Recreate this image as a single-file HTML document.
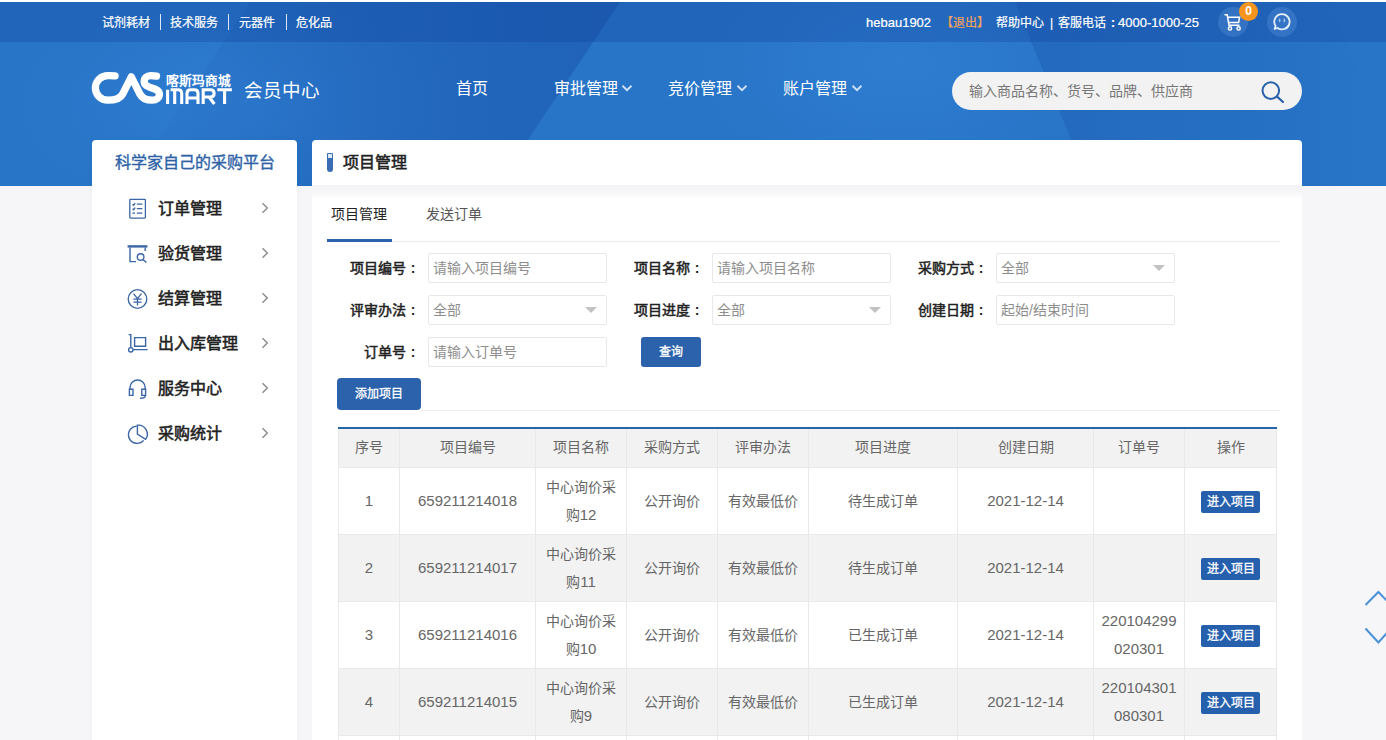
<!DOCTYPE html>
<html lang="zh-CN">
<head>
<meta charset="utf-8">
<title>项目管理 - 会员中心</title>
<style>
*{box-sizing:border-box;margin:0;padding:0}
html,body{width:1386px;height:740px;overflow:hidden}
body{position:relative;background:#f6f6f8;font-family:"Liberation Sans",sans-serif;font-size:14px;color:#666}
.abs{position:absolute;white-space:nowrap}
#hdr{position:absolute;left:0;top:2px;width:1386px;height:184px;background:#2875c8;overflow:hidden}
#hdr svg{position:absolute;left:0;top:0}
#topbar{position:absolute;left:0;top:0;width:1386px;height:40px;background:rgba(14,60,150,.28)}
#strip{position:absolute;left:0;top:0;width:1386px;height:2px;background:#fff}
.tl{position:absolute;top:14px;height:18px;line-height:18px;font-size:12px;color:#fff;white-space:nowrap;-webkit-text-stroke:.2px}
.sep{position:absolute;top:14px;width:1px;height:16px;background:#dbe8f8}
.nav{position:absolute;top:77px;height:24px;line-height:24px;font-size:16px;color:#fff;white-space:nowrap}
.chev{position:absolute;top:84px;width:12px;height:8px}
#search{position:absolute;left:952px;top:72px;width:350px;height:38px;border-radius:19px;background:#f2f2f2}
#search span{position:absolute;left:17px;top:0;line-height:38px;font-size:14px;color:#777;white-space:nowrap}
.circ{position:absolute;top:7px;width:30px;height:30px;border-radius:15px;background:rgba(120,170,240,.24)}
#badge{position:absolute;left:1239px;top:2px;width:19px;height:19px;border-radius:10px;background:#f7941d;color:#fff;font-size:12px;font-weight:bold;line-height:19px;text-align:center}
/* sidebar */
#side{position:absolute;left:92px;top:140px;width:205px;height:610px;background:#fff;border-radius:4px 4px 0 0;box-shadow:0 0 6px rgba(0,0,0,.04)}
#side h3{position:absolute;left:0;top:0;width:205px;height:46px;line-height:46px;text-align:center;font-size:16px;font-weight:500;color:#2d62a6;white-space:nowrap;-webkit-text-stroke:.35px #2d62a6}
.mi{position:absolute;left:0;width:205px;height:45px}
.mi b{position:absolute;left:66px;top:0;line-height:45px;font-size:16px;font-weight:normal;-webkit-text-stroke:.55px #222;color:#222;white-space:nowrap}
.mi svg.ic{position:absolute;left:34px;top:11px;width:24px;height:24px}
.mi svg.ar{position:absolute;left:169px;top:16px;width:8px;height:12px}
/* main */
#title{position:absolute;left:312px;top:140px;width:990px;height:45px;background:#fff;border-radius:4px 4px 0 0}
#title b{position:absolute;left:31px;top:0;line-height:46px;font-size:16px;font-weight:normal;-webkit-text-stroke:.55px #222;color:#222;white-space:nowrap}
#tube{position:absolute;left:15px;top:13px;width:6px;height:19px;border-radius:1px 1px 3px 3px;background:#3a6db5}
#tube i{position:absolute;left:1px;top:1px;width:4px;height:4px;background:#dfeaf8}
#card{position:absolute;left:312px;top:192px;width:990px;height:560px;background:#fff}
.tab{position:absolute;top:12px;line-height:20px;font-size:14px;white-space:nowrap}
#tabline{position:absolute;left:15px;top:49px;width:953px;height:1px;background:#ececec}
#tabact{position:absolute;left:15px;top:47px;width:65px;height:3px;background:#2b62ab}
.lb u{text-decoration:none;display:inline-block;width:14px;text-align:center;margin-left:0;font-weight:bold;-webkit-text-stroke:0}
.lb{position:absolute;width:120px;text-align:right;line-height:30px;font-size:14px;font-weight:normal;-webkit-text-stroke:.5px #222;color:#222;white-space:nowrap}
.in{position:absolute;width:179px;height:30px;border:1px solid #e8e8e8;border-radius:2px;background:#fff;line-height:28px;padding-left:4px;font-size:14px;color:#8e8e8e;white-space:nowrap}
.in i{position:absolute;right:9px;top:11px;width:0;height:0;border:6px solid transparent;border-top:6px solid #c2c2c2;border-bottom:none}
.btn{position:absolute;background:#2b62ab;color:#fff;-webkit-text-stroke:.3px #fff;text-align:center;border-radius:3px;font-size:12px;white-space:nowrap}
#hline{position:absolute;left:109px;top:218px;width:859px;height:1px;background:#eee}
/* table */
#tbl{position:absolute;left:26px;top:235px;width:938px;border-collapse:collapse;table-layout:fixed;border-top:2px solid #2665a8}
#tbl th,#tbl td{border:1px solid #e9e9e9;text-align:center;font-size:14px;font-weight:normal;color:#666;line-height:28px;padding:0}
#tbl th{height:39px;background:#f2f2f2;border-top:none;padding-bottom:2px}
#tbl td{height:67px}
#tbl tr.g td{background:#f2f2f2}
.n{font-size:15px}
.go{display:inline-block;width:59px;height:22px;line-height:22px;background:#2660ad;color:#fff;font-size:12px;border-radius:2px;margin-top:1px;vertical-align:middle;-webkit-text-stroke:.3px #fff}
</style>
</head>
<body>
<div id="hdr">
<svg width="1386" height="184" viewBox="0 0 1386 184">
<defs>
<linearGradient id="g1" x1="0" y1="0" x2="1" y2="0"><stop offset="0" stop-color="#1a56ad" stop-opacity="0"/><stop offset=".55" stop-color="#1a56ad" stop-opacity=".42"/><stop offset="1" stop-color="#1a56ad" stop-opacity=".6"/></linearGradient>
<linearGradient id="g2" x1="0" y1="0" x2="1" y2="0"><stop offset="0" stop-color="#1a56ad" stop-opacity=".4"/><stop offset="1" stop-color="#1a56ad" stop-opacity="0"/></linearGradient>
<radialGradient id="g3" cx=".5" cy=".5" r=".5"><stop offset="0" stop-color="#3a8ae0" stop-opacity=".35"/><stop offset="1" stop-color="#3a8ae0" stop-opacity="0"/></radialGradient>
</defs>
<ellipse cx="250" cy="100" rx="230" ry="110" fill="url(#g3)"/>
<ellipse cx="900" cy="60" rx="200" ry="120" fill="url(#g3)"/>
<polygon points="250,0 620,0 497,184 127,184" fill="url(#g1)"/>
<polygon points="1015,0 1330,0 1405,184 1090,184" fill="url(#g2)"/>
</svg>
<div id="topbar"></div>
</div>
<div id="strip"></div>

<!-- top links -->
<div class="tl" style="left:102px">试剂耗材</div><div class="sep" style="left:160px"></div>
<div class="tl" style="left:170px">技术服务</div><div class="sep" style="left:228px"></div>
<div class="tl" style="left:239px">元器件</div><div class="sep" style="left:286px"></div>
<div class="tl" style="left:296px">危化品</div>
<div class="tl" style="left:866px;font-size:13px">hebau1902</div>
<div class="tl" style="left:941px;color:#f2a35e">【退出】</div>
<div class="tl" style="left:996px">帮助中心</div><div class="tl" style="left:1050px">|</div><div class="tl" style="left:1058px">客服电话</div><div class="tl" style="left:1111px;font-weight:bold">:</div><div class="tl" style="left:1118px;font-size:13px">4000-1000-25</div>
<div class="circ" style="left:1218px"></div>
<div class="circ" style="left:1267px"></div>
<div id="badge">0</div>

<!-- logo -->
<svg class="abs" style="left:90px;top:70px" width="146" height="38" viewBox="0 0 146 38">
<g fill="none" stroke="#fff" stroke-width="7.3" stroke-linecap="round" stroke-linejoin="round">
<path d="M25.1 5.9 C22.5 5.6 20 5.65 17.8 5.65 C10.9 5.65 5.4 11.1 5.4 17.9 C5.4 24.7 10.9 30.2 17.8 30.2 C24 30.2 30.2 29 32.7 24 L41.3 6.85 L49.9 24 C52.4 29 57 30.2 62.3 30.2 C66.5 30.2 69.4 27.6 69.4 24.2 C69.4 20.5 65.5 19.2 61.8 18 C58 16.8 54.2 15.5 54.2 11.5 C54.2 8 57 5.65 60.5 5.65 C63 5.65 65 5.75 66.5 6.1"/>
</g>
<g fill="none" stroke="#fff" stroke-width="3.1" stroke-linejoin="miter">
<path d="M77.6 34 V19.8 M80.6 19.8 H88 Q91.7 19.8 91.7 23.4 V34 M84.7 19.8 V34"/>
<path d="M97 34 V23.4 Q97 19.8 100.6 19.8 H104.4 Q108 19.8 108 23.4 V34 M97 28 H108"/>
<path d="M113.2 34 V19.8 H120.4 Q124.1 19.8 124.1 23.4 Q124.1 27 120.4 27 H113.2 M119 27 L124.4 34"/>
<path d="M127.3 19.8 H141.9 M134.6 19.8 V34"/>
</g>
</svg>
<div class="abs" style="left:166px;top:72.5px;font-size:12.7px;line-height:16px;font-weight:bold;color:#fff">喀斯玛商城</div>
<div class="abs" style="left:244px;top:78px;font-size:18.5px;line-height:26px;color:#fff">会员中心</div>
<!-- nav chevrons -->
<svg class="chev" style="left:621px" viewBox="0 0 12 8"><path d="M1.5 1.8 L6 6.2 L10.5 1.8" fill="none" stroke="#cfe2f9" stroke-width="1.9"/></svg>
<svg class="chev" style="left:736px" viewBox="0 0 12 8"><path d="M1.5 1.8 L6 6.2 L10.5 1.8" fill="none" stroke="#cfe2f9" stroke-width="1.9"/></svg>
<svg class="chev" style="left:851px" viewBox="0 0 12 8"><path d="M1.5 1.8 L6 6.2 L10.5 1.8" fill="none" stroke="#cfe2f9" stroke-width="1.9"/></svg>
<!-- cart / chat icons -->
<svg class="abs" style="left:1222px;top:12px" width="22" height="22" viewBox="0 0 22 22"><g fill="none" stroke="#fff" stroke-width="1.5"><path d="M2.5 2.8 H5.2 L7 13.2 H17.5 M5.6 5.2 H17.6 L16.6 10.6 H6.6"/><circle cx="8" cy="16.4" r="1.6"/><circle cx="16.6" cy="16.4" r="1.6"/></g></svg>
<svg class="abs" style="left:1271px;top:11px" width="22" height="22" viewBox="0 0 22 22"><path d="M11 3.2 A7.6 7.6 0 1 1 6.6 17 L3.6 18 L4.6 15 A7.6 7.6 0 0 1 11 3.2 Z" fill="none" stroke="#e6f0fc" stroke-width="1.8" stroke-linejoin="round"/><path d="M8.6 8.4 V10.4 M13.4 8.4 V10.4" stroke="#9cc3f2" stroke-width="1.6" stroke-linecap="round"/></svg>
<!-- nav -->
<div class="nav" style="left:455.5px">首页</div>
<div class="nav" style="left:554px">审批管理</div>
<div class="nav" style="left:668px">竞价管理</div>
<div class="nav" style="left:783px">账户管理</div>
<div id="search"><span>输入商品名称、货号、品牌、供应商</span><svg style="position:absolute;left:306px;top:6px" width="28" height="28" viewBox="0 0 28 28"><circle cx="12.8" cy="12.6" r="8.3" fill="none" stroke="#2b62ab" stroke-width="2"/><path d="M18.8 18.4 L25 24" stroke="#2b62ab" stroke-width="2.2" stroke-linecap="round"/></svg></div>

<!-- sidebar -->
<div id="side">
<h3>科学家自己的采购平台</h3>
<div class="mi" style="top:46px"><svg class="ic" viewBox="0 0 24 24" fill="none" stroke="#3b66a5" stroke-width="1.3"><rect x="3.8" y="2.3" width="15.6" height="18.8" rx=".8"/><path d="M10.8 7.2 H16.4 M10.8 11.7 H16.4 M10.8 16.2 H16.4 M6.6 7.2 L7.6 8.2 L9.2 6.2 M6.6 11.7 L7.6 12.7 L9.2 10.7 M6.4 16.2 H9"/></svg><b>订单管理</b><svg class="ar" viewBox="0 0 8 12"><path d="M1.5 1.2 L6.3 6 L1.5 10.8" fill="none" stroke="#8a8a8a" stroke-width="1.4"/></svg></div>
<div class="mi" style="top:91px"><svg class="ic" viewBox="0 0 24 24" fill="none" stroke="#3b66a5" stroke-width="1.4"><path d="M1.6 4.4 H21.4" stroke-width="2.4"/><path d="M4 5.6 V19.6 H10"/><circle cx="14.6" cy="15" r="3.3"/><path d="M17 17.6 L20.4 20.6 M19.2 5.6 V9"/></svg><b>验货管理</b><svg class="ar" viewBox="0 0 8 12"><path d="M1.5 1.2 L6.3 6 L1.5 10.8" fill="none" stroke="#8a8a8a" stroke-width="1.4"/></svg></div>
<div class="mi" style="top:136px"><svg class="ic" viewBox="0 0 24 24" fill="none" stroke="#3b66a5" stroke-width="1.3"><circle cx="11.5" cy="12" r="9.3"/><path d="M7.6 6.6 L11.5 11.6 L15.4 6.6 M11.5 11.6 V18.4 M7.4 12.2 H15.6 M7.4 15.2 H15.6"/></svg><b>结算管理</b><svg class="ar" viewBox="0 0 8 12"><path d="M1.5 1.2 L6.3 6 L1.5 10.8" fill="none" stroke="#8a8a8a" stroke-width="1.4"/></svg></div>
<div class="mi" style="top:181px"><svg class="ic" viewBox="0 0 24 24" fill="none" stroke="#3b66a5" stroke-width="1.4"><path d="M2.6 2.6 H4.8 V15.6 M7 17.6 H21.6 M8.6 5.6 H19.6 V14.2 H8.6 Z"/><circle cx="4.8" cy="17.8" r="2.2"/></svg><b>出入库管理</b><svg class="ar" viewBox="0 0 8 12"><path d="M1.5 1.2 L6.3 6 L1.5 10.8" fill="none" stroke="#8a8a8a" stroke-width="1.4"/></svg></div>
<div class="mi" style="top:226px"><svg class="ic" viewBox="0 0 24 24" fill="none" stroke="#3b66a5" stroke-width="1.4"><path d="M4 12.4 V10.6 A7.6 7.6 0 0 1 19.2 10.6 V12.4"/><path d="M7 12.2 H3.4 V18.4 H7 Z M15.8 12.2 H19.6 V18.4 H15.8 Z M19.4 18.4 Q19.4 21.2 14 21.2"/></svg><b>服务中心</b><svg class="ar" viewBox="0 0 8 12"><path d="M1.5 1.2 L6.3 6 L1.5 10.8" fill="none" stroke="#8a8a8a" stroke-width="1.4"/></svg></div>
<div class="mi" style="top:271px"><svg class="ic" viewBox="0 0 24 24" fill="none" stroke="#3b66a5" stroke-width="1.4"><path d="M10.6 4.2 A8.6 8.6 0 1 0 17.6 18.4"/><path d="M11.4 3.2 A9 9 0 0 1 19.6 17.4 L11.4 12 Z"/></svg><b>采购统计</b><svg class="ar" viewBox="0 0 8 12"><path d="M1.5 1.2 L6.3 6 L1.5 10.8" fill="none" stroke="#8a8a8a" stroke-width="1.4"/></svg></div>
</div>

<!-- main -->
<div id="title"><div id="tube"><i></i></div><b>项目管理</b></div>
<div id="card">
<div class="tab" style="left:19px;color:#222">项目管理</div>
<div class="tab" style="left:114px;color:#555">发送订单</div>
<div id="tabline"></div><div id="tabact"></div>
<!-- filter form -->
<div class="lb" style="left:-12px;top:61px">项目编号<u>:</u></div><div class="in" style="left:116px;top:61px">请输入项目编号</div>
<div class="lb" style="left:272px;top:61px">项目名称<u>:</u></div><div class="in" style="left:400px;top:61px">请输入项目名称</div>
<div class="lb" style="left:556px;top:61px">采购方式<u>:</u></div><div class="in" style="left:684px;top:61px">全部<i></i></div>
<div class="lb" style="left:-12px;top:103px">评审办法<u>:</u></div><div class="in" style="left:116px;top:103px">全部<i></i></div>
<div class="lb" style="left:272px;top:103px">项目进度<u>:</u></div><div class="in" style="left:400px;top:103px">全部<i></i></div>
<div class="lb" style="left:556px;top:103px">创建日期<u>:</u></div><div class="in" style="left:684px;top:103px">起始/结束时间</div>
<div class="lb" style="left:-12px;top:145px">订单号<u>:</u></div><div class="in" style="left:116px;top:145px">请输入订单号</div>
<div class="btn" style="left:329px;top:145px;width:60px;height:30px;line-height:30px">查询</div>
<div class="btn" style="left:25px;top:186px;width:84px;height:32px;line-height:32px;border-radius:4px">添加项目</div>
<div id="hline"></div>
<!-- table -->
<table id="tbl">
<colgroup><col style="width:61px"><col style="width:136px"><col style="width:91px"><col style="width:91px"><col style="width:91px"><col style="width:149px"><col style="width:136px"><col style="width:91px"><col style="width:92px"></colgroup>
<tr><th>序号</th><th>项目编号</th><th>项目名称</th><th>采购方式</th><th>评审办法</th><th>项目进度</th><th>创建日期</th><th>订单号</th><th>操作</th></tr>
<tr><td><span class="n">1</span></td><td><span class="n">659211214018</span></td><td>中心询价采<br>购<span class="n">12</span></td><td>公开询价</td><td>有效最低价</td><td>待生成订单</td><td><span class="n">2021-12-14</span></td><td></td><td><span class="go">进入项目</span></td></tr>
<tr class="g"><td><span class="n">2</span></td><td><span class="n">659211214017</span></td><td>中心询价采<br>购<span class="n">11</span></td><td>公开询价</td><td>有效最低价</td><td>待生成订单</td><td><span class="n">2021-12-14</span></td><td></td><td><span class="go">进入项目</span></td></tr>
<tr><td><span class="n">3</span></td><td><span class="n">659211214016</span></td><td>中心询价采<br>购<span class="n">10</span></td><td>公开询价</td><td>有效最低价</td><td>已生成订单</td><td><span class="n">2021-12-14</span></td><td><span class="n">220104299<br>020301</span></td><td><span class="go">进入项目</span></td></tr>
<tr class="g"><td><span class="n">4</span></td><td><span class="n">659211214015</span></td><td>中心询价采<br>购<span class="n">9</span></td><td>公开询价</td><td>有效最低价</td><td>已生成订单</td><td><span class="n">2021-12-14</span></td><td><span class="n">220104301<br>080301</span></td><td><span class="go">进入项目</span></td></tr>
<tr><td><span class="n">5</span></td><td><span class="n">659211214014</span></td><td>中心询价采<br>购<span class="n">8</span></td><td>公开询价</td><td>有效最低价</td><td>已生成订单</td><td><span class="n">2021-12-14</span></td><td></td><td><span class="go">进入项目</span></td></tr>
</table>
</div>
<div class="abs" style="left:312px;top:185px;width:990px;height:14px;background:linear-gradient(#f3f3f6,#f6f6f9 50%,#fff)"></div>
<!-- scroll arrows -->
<svg class="abs" style="left:1360px;top:586px" width="26" height="62" viewBox="0 0 26 62"><path d="M5.5 19 L18.4 6 L31 19 M5.5 42.5 L18.4 56.5 L31 42.5" fill="none" stroke="#4a90d9" stroke-width="2"/></svg>
</body>
</html>
